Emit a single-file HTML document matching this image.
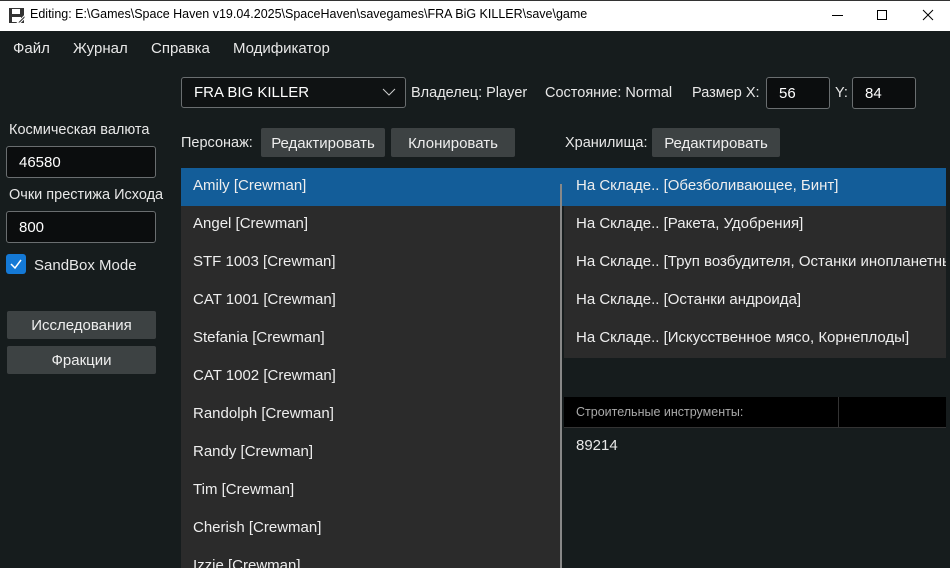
<!DOCTYPE html><html><head><style>
*{margin:0;padding:0;box-sizing:border-box}
html{width:950px;height:568px;overflow:hidden}
body{width:950px;height:568px;overflow:hidden;background:#161c1d;font-family:"Liberation Sans",sans-serif;color:#e8e8e8;font-size:14.5px;position:relative}
.a{position:absolute;white-space:nowrap}
.inp{position:absolute;background:#0b0d0e;border:1px solid #6a6e70;border-radius:3px;padding-left:12px;color:#fff;font-size:15px}
.btn{position:absolute;background:#3d4243;border-radius:2px;text-align:center;color:#eee;font-size:15px}
.row{position:absolute;height:38px;line-height:36px;padding-left:12px;font-size:15px;color:#eee;white-space:nowrap;overflow:hidden}
</style></head><body>
<div class="a" style="left:0;top:0;width:950px;height:31px;background:#fff;border-top:1px solid #333"></div>
<svg class="a" style="left:8px;top:7px" width="18" height="18" viewBox="0 0 18 18"><rect x="1" y="1" width="15" height="15" fill="#333"/><rect x="4" y="2" width="8" height="5" fill="#fff"/><rect x="4" y="10" width="9" height="5" fill="#fff"/><path d="M9 16 L17 8 L17 11 L12 16Z" fill="#333" stroke="#fff"/></svg>
<div class="a" style="left:30px;top:7px;color:#000;font-size:12.5px">Editing: E:\Games\Space Haven v19.04.2025\SpaceHaven\savegames\FRA BiG KILLER\save\game</div>
<div class="a" style="left:832px;top:15px;width:11px;height:1px;background:#000"></div>
<div class="a" style="left:877px;top:10px;width:10px;height:10px;border:1px solid #000"></div>
<svg class="a" style="left:922px;top:9px" width="12" height="12"><path d="M1 1L11 11M11 1L1 11" stroke="#000"/></svg>
<div class="a" style="left:13px;top:40px;font-size:15px">Файл</div>
<div class="a" style="left:73px;top:40px;font-size:15px">Журнал</div>
<div class="a" style="left:151px;top:40px;font-size:15px">Справка</div>
<div class="a" style="left:233px;top:40px;font-size:15px">Модификатор</div>
<div class="a" style="left:9px;top:122px">Космическая валюта</div>
<div class="inp" style="left:6px;top:146px;width:150px;height:32px;line-height:31px">46580</div>
<div class="a" style="left:9px;top:187px">Очки престижа Исхода</div>
<div class="inp" style="left:6px;top:211px;width:150px;height:32px;line-height:31px">800</div>
<div class="a" style="left:6px;top:254px;width:20px;height:20px;background:#1479d6;border-radius:3px"></div>
<svg class="a" style="left:6px;top:254px" width="20" height="20"><path d="M5 10L9 14L15 6" stroke="#fff" stroke-width="1.5" fill="none"/></svg>
<div class="a" style="left:34px;top:257px;font-size:15px">SandBox Mode</div>
<div class="btn" style="left:7px;top:311px;width:149px;height:28px;line-height:29px">Исследования</div>
<div class="btn" style="left:7px;top:346px;width:149px;height:28px;line-height:29px">Фракции</div>
<div class="inp" style="left:181px;top:77px;width:225px;height:31px;line-height:30px;background:#0f1213">FRA BIG KILLER</div>
<svg class="a" style="left:382px;top:88px" width="14" height="9"><path d="M1 1L7 7L13 1" stroke="#ccc" fill="none"/></svg>
<div class="a" style="left:411px;top:85px">Владелец: Player</div>
<div class="a" style="left:545px;top:85px">Состояние: Normal</div>
<div class="a" style="left:692px;top:85px">Размер X:</div>
<div class="inp" style="left:766px;top:77px;width:64px;height:32px;line-height:32px">56</div>
<div class="a" style="left:835px;top:85px">Y:</div>
<div class="inp" style="left:852px;top:77px;width:64px;height:32px;line-height:32px">84</div>
<div class="a" style="left:181px;top:135px">Персонаж:</div>
<div class="btn" style="left:261px;top:128px;width:124px;height:29px;line-height:31px">Редактировать</div>
<div class="btn" style="left:391px;top:128px;width:124px;height:29px;line-height:31px">Клонировать</div>
<div class="a" style="left:565px;top:135px">Хранилища:</div>
<div class="btn" style="left:652px;top:128px;width:128px;height:29px;line-height:31px">Редактировать</div>
<div class="a" style="left:181px;top:168px;width:380px;height:400px;background:#2b2b2b"></div>
<div class="a" style="left:564px;top:168px;width:382px;height:190px;background:#2b2b2b"></div>
<div class="a" style="left:181px;top:168px;width:765px;height:38px;background:#135d99"></div>
<div class="row" style="left:181px;top:168px">Amily [Crewman]</div>
<div class="row" style="left:181px;top:206px">Angel [Crewman]</div>
<div class="row" style="left:181px;top:244px">STF 1003 [Crewman]</div>
<div class="row" style="left:181px;top:282px">CAT 1001 [Crewman]</div>
<div class="row" style="left:181px;top:320px">Stefania [Crewman]</div>
<div class="row" style="left:181px;top:358px">CAT 1002 [Crewman]</div>
<div class="row" style="left:181px;top:396px">Randolph [Crewman]</div>
<div class="row" style="left:181px;top:434px">Randy [Crewman]</div>
<div class="row" style="left:181px;top:472px">Tim [Crewman]</div>
<div class="row" style="left:181px;top:510px">Cherish [Crewman]</div>
<div class="row" style="left:181px;top:548px;height:20px">Izzie [Crewman]</div>
<div class="a" style="left:560px;top:184px;width:2px;height:384px;background:#888"></div>
<div class="row" style="left:564px;top:168px;width:382px">На Складе.. [Обезболивающее, Бинт]</div>
<div class="row" style="left:564px;top:206px;width:382px">На Складе.. [Ракета, Удобрения]</div>
<div class="row" style="left:564px;top:244px;width:382px">На Складе.. [Труп возбудителя, Останки инопланетных</div>
<div class="row" style="left:564px;top:282px;width:382px">На Складе.. [Останки андроида]</div>
<div class="row" style="left:564px;top:320px;width:382px">На Складе.. [Искусственное мясо, Корнеплоды]</div>
<div class="a" style="left:564px;top:397px;width:382px;height:31px;background:#000;border-bottom:1px solid #333"></div>
<div class="a" style="left:838px;top:397px;width:1px;height:31px;background:#333"></div>
<div class="a" style="left:576px;top:405px;font-size:12.5px;color:#aaa">Строительные инструменты:</div>
<div class="a" style="left:576px;top:437px;font-size:15px">89214</div>
</body></html>
